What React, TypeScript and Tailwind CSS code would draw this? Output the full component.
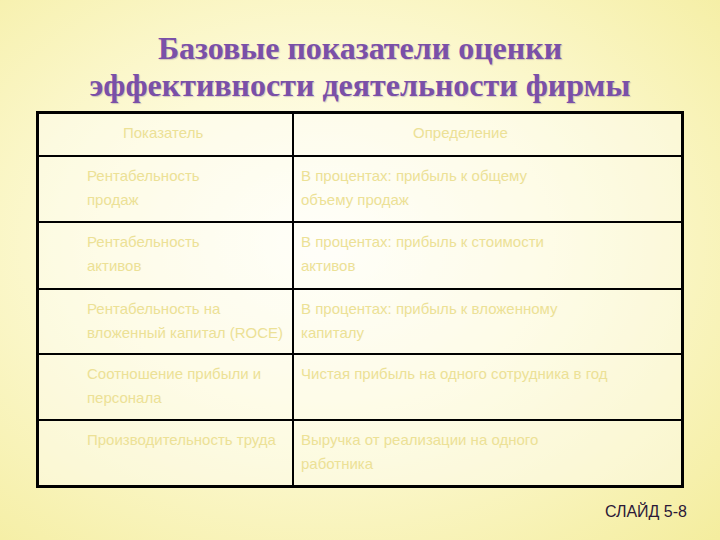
const rows = [
  { left: ["Показатель"], right: ["Определение"], h: "h-[43px]", header: true },
  { left: ["Рентабельность", "продаж"], right: ["В процентах: прибыль к общему", "объему продаж"], h: "h-[66px]" },
  { left: ["Рентабельность", "активов"], right: ["В процентах: прибыль к стоимости", "активов"], h: "h-[67px]" },
  { left: ["Рентабельность на", "вложенный капитал (ROCE)"], right: ["В процентах: прибыль к вложенному", "капиталу"], h: "h-[65px]" },
  { left: ["Соотношение прибыли и", "персонала"], right: ["Чистая прибыль на одного сотрудника в год"], h: "h-[66px]" },
  { left: ["Производительность труда"], right: ["Выручка от реализации на одного", "работника"], h: "h-[64px]" },
];

export default function App() {
  return (
    <div className="w-[720px] h-[540px] overflow-hidden bg-[radial-gradient(ellipse_at_45%_45%,#fffef6_0%,#fdfad8_40%,#f4ed9e_100%)] flex flex-col items-center">
      <h1 className="mt-[30px] text-center text-[32px] leading-[37px] font-bold text-[#7a50a8] [font-family:'Liberation_Serif',serif] [text-shadow:1px_1px_1px_rgba(90,60,120,0.25)]">
        Базовые показатели оценки
        <br />
        эффективности деятельности фирмы
      </h1>

      <div className="mt-[7px] w-[648px] border-[3px] border-black grid grid-cols-[255px_1fr] [font-family:'Liberation_Sans',Arial,sans-serif] text-[15px] leading-[24px] text-[#ece196]">
        {rows.map((r, i) => {
          const last = i === rows.length - 1;
          return (
            <div key={i} className="contents">
              <div className={`${r.h} border-r-2 border-black ${last ? "" : "border-b-2"} bg-white/40 pl-[48px] pt-[7px] whitespace-nowrap`}>
                {r.left.map((t) => (
                  <div key={t} className={r.header ? "pl-[36px]" : ""}>{t}</div>
                ))}
              </div>
              <div className={`${r.h} border-black ${last ? "" : "border-b-2"} bg-white/40 pl-[7px] pt-[7px] whitespace-nowrap`}>
                {r.right.map((t) => (
                  <div key={t} className={r.header ? "pl-[112px]" : ""}>{t}</div>
                ))}
              </div>
            </div>
          );
        })}
      </div>

      <div className="w-full flex justify-end pr-[33px] mt-[14px]">
        <span className="text-[16px] leading-[20px] text-[#2b1838] [font-family:'Liberation_Sans',Arial,sans-serif]">СЛАЙД 5-8</span>
      </div>
    </div>
  );
}
